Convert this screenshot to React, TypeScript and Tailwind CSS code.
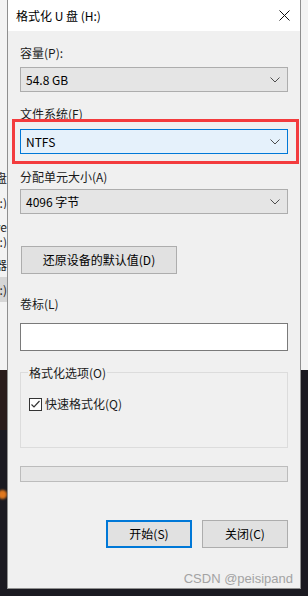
import React from "react";

function Chevron() {
  return (
    <svg width="10" height="6" viewBox="0 0 10 6" className="shrink-0">
      <path d="M0.5 0.5L5 5L9.5 0.5" fill="none" stroke="#4d4d4d" strokeWidth="1" />
    </svg>
  );
}

function Label({ children, className = "" }: { children: React.ReactNode; className?: string }) {
  return <div className={`h-[16px] leading-[16px] text-[12px] text-[#1a1a1a] ${className}`}>{children}</div>;
}

function Select({ value, focused = false }: { value: string; focused?: boolean }) {
  return (
    <div
      className={`h-[25px] w-full flex items-center justify-between pl-[5px] pr-[7px] border text-[12px] text-black ${
        focused ? "bg-[#e5f1fb] border-[#0078d7]" : "bg-[#e5e5e5] border-[#adadad]"
      }`}
    >
      <span>{value}</span>
      <Chevron />
    </div>
  );
}

// bits of the explorer window peeking out on the left
const sideItems = [
  { text: "U 盘", mt: "mt-[172px]" },
  { text: "(H:)", mt: "mt-[13px]" },
  { text: "Drive", mt: "mt-[12px]" },
  { text: "(F:)", mt: "mt-[3px]" },
  { text: "存储器", mt: "mt-[11px]" },
];

export default function App() {
  return (
    <div className="relative w-[308px] h-[596px] overflow-hidden bg-[#1b1a21] font-['Noto_Sans_CJK_SC','Noto_Sans',sans-serif]">
      {/* window behind */}
      <div className="h-[370px] bg-[#f3f3f3] flex flex-col">
        {sideItems.map((s) => (
          <div key={s.text} className={`${s.mt} h-[12px] w-[7px] flex justify-end overflow-hidden`}>
            <span className="whitespace-nowrap text-[12px] leading-[12px] text-[#222]">{s.text}</span>
          </div>
        ))}
        <div className="mt-[6px] h-[25px] w-[7px] bg-[#d6d6d6] flex items-center justify-end overflow-hidden">
          <span className="whitespace-nowrap text-[12px] leading-[12px] text-[#222]">(G:)</span>
        </div>
      </div>
      <div className="absolute left-0 top-[370px] w-[7px] h-[60px] bg-[#2a1d1c]" />
      <div className="absolute left-[-2px] top-[490px] w-[9px] h-[9px] rounded-full bg-[#e0781f] blur-[1px]" />

      {/* format dialog */}
      <div className="absolute left-[7px] top-0 w-[294px] h-[589px] border-x border-b border-[#8f8f8f] flex flex-col">
        <div className="h-[31px] bg-white flex items-center justify-between pl-[8px] pr-[10px] shrink-0">
          <span className="text-[12px] text-black">格式化 U 盘 (H:)</span>
          <svg width="11" height="11" viewBox="0 0 11 11">
            <path d="M0.5 0.5L10.5 10.5M10.5 0.5L0.5 10.5" stroke="#111" strokeWidth="1" />
          </svg>
        </div>

        <div className="flex-1 bg-[#f0f0f0] px-[12px] flex flex-col">
          <Label className="mt-[14px]">容量(P):</Label>
          <div className="mt-[6px]">
            <Select value="54.8 GB" />
          </div>

          <Label className="mt-[14px]">文件系统(F)</Label>
          <div className="relative mt-[7px]">
            <Select value="NTFS" focused />
            <div className="absolute top-[-10px] bottom-[-10px] left-[-8px] right-[-11px] border-[3px] border-[#f33b3d]" />
          </div>

          <Label className="mt-[15px]">分配单元大小(A)</Label>
          <div className="mt-[4px]">
            <Select value="4096 字节" />
          </div>

          <button className="mt-[32px] ml-px h-[28px] w-[156px] bg-[#e1e1e1] border border-[#adadad] text-[12px] text-black">
            还原设备的默认值(D)
          </button>

          <Label className="mt-[22px]">卷标(L)</Label>
          <div className="mt-[11px] h-[28px] bg-white border border-[#7a7a7a]" />

          <div className="relative mt-[21px] h-[76px] border border-[#dcdcdc]">
            <span className="absolute top-[-8px] left-[7px] px-[1px] bg-[#f0f0f0] text-[12px] leading-[16px] text-[#1a1a1a]">
              格式化选项(O)
            </span>
            <div className="mt-[23px] ml-[8px] flex items-center gap-[3px]">
              <div className="w-[13px] h-[13px] bg-white border border-[#333] flex items-center justify-center">
                <svg width="11" height="11" viewBox="0 0 11 11">
                  <path d="M1.5 5.5L4 8L9.5 2" fill="none" stroke="#333" strokeWidth="1.2" />
                </svg>
              </div>
              <span className="text-[12px] leading-[16px] text-[#1a1a1a]">快速格式化(Q)</span>
            </div>
          </div>

          <div className="mt-[18px] h-[16px] bg-[#e6e6e6] border border-[#bcbcbc]" />

          <div className="mt-[38px] flex justify-end gap-[10px]">
            <button className="h-[28px] w-[86px] bg-[#e1e1e1] border-2 border-[#0078d7] text-[12px] text-black">
              开始(S)
            </button>
            <button className="h-[28px] w-[86px] bg-[#e1e1e1] border border-[#adadad] text-[12px] text-black">
              关闭(C)
            </button>
          </div>
        </div>
      </div>

      <span className="absolute right-[15px] bottom-[9px] text-[13px] leading-[16px] text-[#a3a3a3] font-['Liberation_Sans',sans-serif]">
        CSDN @peisipand
      </span>
    </div>
  );
}
